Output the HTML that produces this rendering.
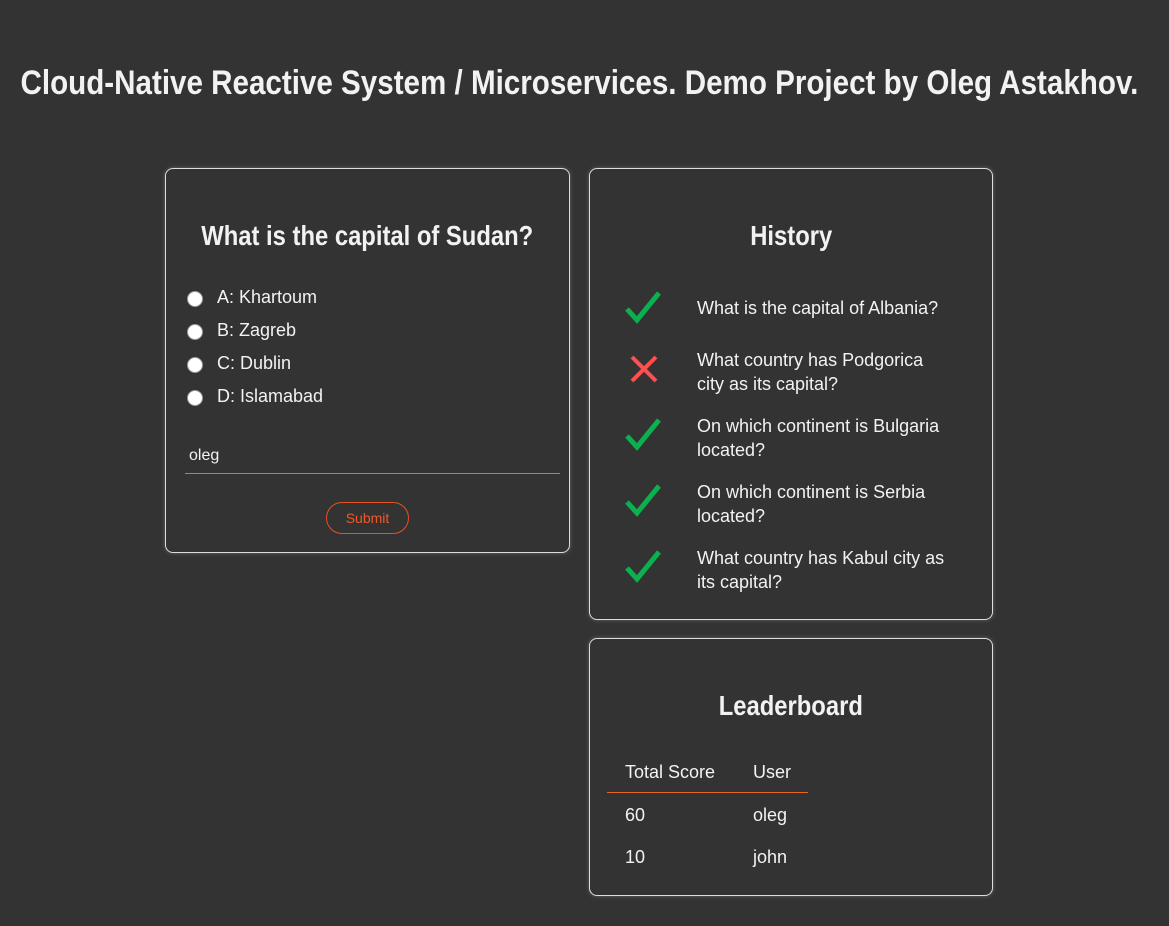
<!DOCTYPE html>
<html><head><meta charset="utf-8"><style>
*{margin:0;padding:0;box-sizing:border-box}
body{width:1169px;height:926px;background:#333;color:#f2f2f2;font-family:"Liberation Sans",sans-serif;position:relative;overflow:hidden}
.abs{position:absolute}
.hc{position:absolute;display:flex;justify-content:center}
.h{font-weight:bold;white-space:nowrap;transform-origin:center;display:inline-block;flex:none}
.card{position:absolute;border:1px solid #ddd;border-radius:8px;box-shadow:0 0 4px rgba(255,255,255,.25)}
.t{font-size:18px;position:absolute;white-space:nowrap}
.radio{position:absolute;width:16px;height:16px;border-radius:50%;background:#fff;border:1px solid #999}
</style></head><body>
<div class="hc" style="left:-5px;width:1169px;top:64px"><span class="h" style="font-size:34px;transform:scaleX(0.87)">Cloud-Native Reactive System / Microservices. Demo Project by Oleg Astakhov.</span></div>

<div class="card" style="left:165px;top:168px;width:405px;height:385px">
<div class="hc" style="left:0;width:403px;top:51px"><span class="h" style="font-size:28px;transform:scaleX(0.85)">What is the capital of Sudan?</span></div>
<div class="radio" style="left:21px;top:122px"></div><div class="t" style="left:51px;top:118px">A: Khartoum</div>
<div class="radio" style="left:21px;top:155px"></div><div class="t" style="left:51px;top:151px">B: Zagreb</div>
<div class="radio" style="left:21px;top:188px"></div><div class="t" style="left:51px;top:184px">C: Dublin</div>
<div class="radio" style="left:21px;top:221px"></div><div class="t" style="left:51px;top:217px">D: Islamabad</div>
<div class="t" style="left:23px;top:278px;font-size:16px">oleg</div>
<div class="abs" style="left:19px;top:304px;width:375px;height:1px;background:#f06a25"></div>
<div class="abs" style="left:160px;top:333px;width:83px;height:32px;border:1px solid #e8501f;border-radius:16px;color:#f05a28;font-size:14px;text-align:center;line-height:30px">Submit</div>
</div>

<div class="card" style="left:589px;top:168px;width:404px;height:452px">
<div class="hc" style="left:0;width:402px;top:51px"><span class="h" style="font-size:28px;transform:scaleX(0.85)">History</span></div>
<svg class="abs" style="left:34px;top:122px" width="40" height="34"><path d="M3 18 L13 29 L35 2" stroke="#0bb04f" stroke-width="5" fill="none"/></svg>
<div class="t" style="left:107px;top:129px">What is the capital of Albania?</div>
<svg class="abs" style="left:40px;top:186px" width="28" height="28"><path d="M2 2 L26 26 M26 2 L2 26" stroke="#ff4f4f" stroke-width="4"/></svg>
<div class="t" style="left:107px;top:179px;line-height:24px">What country has Podgorica<br>city as its capital?</div>
<svg class="abs" style="left:34px;top:249px" width="40" height="34"><path d="M3 18 L13 29 L35 2" stroke="#0bb04f" stroke-width="5" fill="none"/></svg>
<div class="t" style="left:107px;top:245px;line-height:24px">On which continent is Bulgaria<br>located?</div>
<svg class="abs" style="left:34px;top:315px" width="40" height="34"><path d="M3 18 L13 29 L35 2" stroke="#0bb04f" stroke-width="5" fill="none"/></svg>
<div class="t" style="left:107px;top:311px;line-height:24px">On which continent is Serbia<br>located?</div>
<svg class="abs" style="left:34px;top:381px" width="40" height="34"><path d="M3 18 L13 29 L35 2" stroke="#0bb04f" stroke-width="5" fill="none"/></svg>
<div class="t" style="left:107px;top:377px;line-height:24px">What country has Kabul city as<br>its capital?</div>
</div>

<div class="card" style="left:589px;top:638px;width:404px;height:258px">
<div class="hc" style="left:0;width:402px;top:51px"><span class="h" style="font-size:28px;transform:scaleX(0.85)">Leaderboard</span></div>
<div class="t" style="left:35px;top:123px">Total Score</div><div class="t" style="left:163px;top:123px">User</div>
<div class="abs" style="left:17px;top:153px;width:201px;height:1px;background:#e8641f"></div>
<div class="t" style="left:35px;top:166px">60</div><div class="t" style="left:163px;top:166px">oleg</div>
<div class="t" style="left:35px;top:208px">10</div><div class="t" style="left:163px;top:208px">john</div>
</div>
</body></html>
